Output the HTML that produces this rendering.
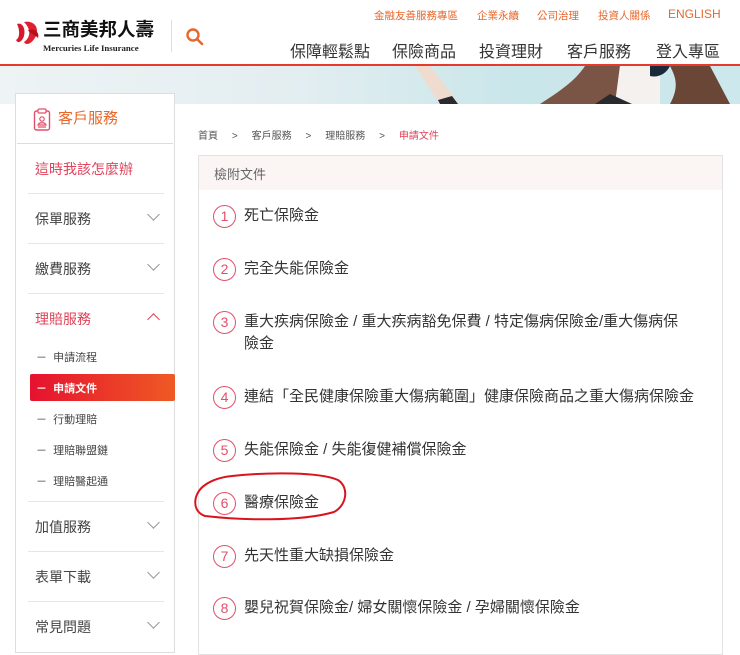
<!DOCTYPE html>
<html><head><meta charset="utf-8"><style>
*{margin:0;padding:0;box-sizing:border-box}
body{width:740px;height:646px;overflow:hidden;background:#fff;font-family:"Liberation Sans","Noto Sans CJK TC",sans-serif;position:relative;color:#333}
.abs{position:absolute;white-space:nowrap}
.top a{color:#e8672a;font-size:10.5px;position:absolute;top:8px}
.nav{position:absolute;top:38px;font-size:16px;color:#333}
.side{position:absolute;left:15px;top:93px;width:160px;height:560px;border:1px solid #ddd;background:#fff}
.si{position:absolute;left:19px;font-size:14px;color:#444}
.dv{position:absolute;left:12px;width:136px;height:1px;background:#e6e6e6}
.chev{position:absolute;left:133px;width:9px;height:9px;border-right:1px solid #999;border-bottom:1px solid #999;transform:rotate(45deg)}
.sub{position:absolute;left:20px;font-size:11px;color:#444}
.box{position:absolute;left:198px;top:155px;width:525px;height:500px;border:1px solid #e2e2e2}
.it{position:absolute;left:244px;font-size:15px;color:#333;line-height:22px}
.c{position:absolute;left:213px;width:23px;height:23px;border:1.3px solid #e0506a;border-radius:50%;color:#e0506a;font-size:14px;text-align:center;line-height:21px}
</style></head><body>
<svg class="abs" style="left:14px;top:20px" width="30" height="28" viewBox="0 0 30 28"><path d="M3 4 C8 2 12 8 10 16 C8 22 4 24 2 20 C6 18 6 10 3 4Z" fill="#d7192c"/><path d="M10 2 C18 0 26 6 22 16 C18 24 12 26 10 22 C16 18 18 10 10 2Z" fill="#e02030"/><path d="M14 10 C20 8 26 12 24 18 C20 14 16 14 14 10Z" fill="#b5101e"/></svg>
<div class="abs" style="left:43px;top:18px;font-size:18.5px;line-height:24px;font-weight:bold;color:#111">三商美邦人壽</div>
<div class="abs" style="left:43px;top:43px;font-size:8.8px;line-height:10px;font-weight:bold;font-family:'Liberation Serif',serif;color:#222">Mercuries Life Insurance</div>
<div class="abs" style="left:171px;top:20px;width:1px;height:32px;background:#ddd"></div>
<svg class="abs" style="left:185px;top:27px" width="20" height="20" viewBox="0 0 20 20"><circle cx="8" cy="8" r="5.5" fill="none" stroke="#e8672a" stroke-width="2.4"/><path d="M12 12 L17 17" stroke="#e8672a" stroke-width="2.6" stroke-linecap="round"/></svg>
<div class="top"><a style="left:374px">金融友善服務專區</a><a style="left:477px">企業永續</a><a style="left:537px">公司治理</a><a style="left:598px">投資人關係</a><a style="left:668px;top:7px;font-size:12px">ENGLISH</a></div>
<div class="nav" style="left:290px">保障輕鬆點</div>
<div class="nav" style="left:392px">保險商品</div>
<div class="nav" style="left:479px">投資理財</div>
<div class="nav" style="left:567px">客戶服務</div>
<div class="nav" style="left:656px">登入專區</div>
<div class="abs" style="left:0;top:64px;width:740px;height:2px;background:#e63a2e"></div>
<div class="abs" style="left:0;top:66px;width:740px;height:38px;background:linear-gradient(90deg,#eef3f5 0%,#e3eef1 40%,#c9e6ea 70%,#cde8ec 100%)"></div>
<svg class="abs" style="left:370px;top:66px" width="370" height="38"><path d="M60 0 L85 32 L70 38 L45 0Z" fill="#f0dccf"/><path d="M68 34 L82 30 L88 38 L70 38Z" fill="#2a2a2e"/><path d="M215 0 L250 0 L245 38 L170 38 C190 25 205 15 215 0Z" fill="#7a5444"/><path d="M250 0 L290 0 L290 38 L245 38Z" fill="#f4f1ef"/><path d="M280 0 L300 0 C296 8 288 12 280 10Z" fill="#1a2a3a"/><path d="M300 0 L340 0 L360 38 L300 38 C310 20 305 10 300 0Z" fill="#6a4636"/><path d="M240 28 L262 38 L225 38Z" fill="#2a2a2e"/></svg>
<div class="side">
<svg class="abs" style="left:17px;top:14px" width="18" height="24" viewBox="0 0 18 24"><rect x="1.5" y="3" width="15" height="19" rx="2" fill="none" stroke="#e0506a" stroke-width="1.4"/><rect x="5" y="1" width="8" height="4" rx="1" fill="#fff" stroke="#e0506a" stroke-width="1.2"/><circle cx="9" cy="11" r="2.2" fill="none" stroke="#e0506a" stroke-width="1.2"/><path d="M5 17 C6 14 12 14 13 17Z M5 19 H13" fill="none" stroke="#e0506a" stroke-width="1.2"/></svg>
<div class="abs" style="left:42px;top:13px;font-size:15px;color:#e8672a">客戶服務</div>
<div class="abs" style="left:1px;top:49px;width:156px;height:1px;background:#ddd"></div>
<div class="si" style="top:65px;color:#e0435a">這時我該怎麼辦</div>
<div class="dv" style="top:99px"></div>
<div class="si" style="top:115px">保單服務</div><div class="chev" style="top:116px"></div>
<div class="dv" style="top:149px"></div>
<div class="si" style="top:165px">繳費服務</div><div class="chev" style="top:166px"></div>
<div class="dv" style="top:199px"></div>
<div class="si" style="top:215px;color:#e0435a">理賠服務</div><div class="chev" style="top:221px;transform:rotate(225deg);border-color:#e0435a"></div>
<div class="sub" style="top:255px">－ &nbsp;申請流程</div>
<div class="abs" style="left:14px;top:280px;width:145px;height:27px;background:linear-gradient(90deg,#e5122f,#ef5a24);border-radius:2px"></div>
<div class="sub" style="top:286px;color:#fff;font-weight:bold">－ &nbsp;申請文件</div>
<div class="sub" style="top:317px">－ &nbsp;行動理賠</div>
<div class="sub" style="top:348px">－ &nbsp;理賠聯盟鏈</div>
<div class="sub" style="top:379px">－ &nbsp;理賠醫起通</div>
<div class="dv" style="top:407px"></div>
<div class="si" style="top:423px">加值服務</div><div class="chev" style="top:424px"></div>
<div class="dv" style="top:457px"></div>
<div class="si" style="top:473px">表單下載</div><div class="chev" style="top:474px"></div>
<div class="dv" style="top:507px"></div>
<div class="si" style="top:523px">常見問題</div><div class="chev" style="top:524px"></div>
</div>
<div class="abs" style="left:198px;top:127px;font-size:10px;color:#555">首頁 &nbsp;&nbsp;&nbsp;&nbsp;&gt;&nbsp;&nbsp;&nbsp;&nbsp; 客戶服務 &nbsp;&nbsp;&nbsp;&nbsp;&gt;&nbsp;&nbsp;&nbsp;&nbsp; 理賠服務 &nbsp;&nbsp;&nbsp;&nbsp;&gt;&nbsp;&nbsp;&nbsp;&nbsp; <span style="color:#e0435a">申請文件</span></div>
<div class="box"><div style="height:34px;background:#fbf5f4;padding:8px 0 0 15px;font-size:13px;color:#666">檢附文件</div></div>
<div class="c" style="top:205px">1</div><div class="it" style="top:205px">死亡保險金</div>
<div class="c" style="top:258px">2</div><div class="it" style="top:258px">完全失能保險金</div>
<div class="c" style="top:311px">3</div><div class="it" style="top:311px;white-space:normal;width:445px">重大疾病保險金 / 重大疾病豁免保費 / 特定傷病保險金/重大傷病保險金</div>
<div class="c" style="top:386px">4</div><div class="it" style="top:386px">連結「全民健康保險重大傷病範圍」健康保險商品之重大傷病保險金</div>
<div class="c" style="top:439px">5</div><div class="it" style="top:439px">失能保險金 / 失能復健補償保險金</div>
<div class="c" style="top:492px">6</div><div class="it" style="top:492px">醫療保險金</div>
<div class="c" style="top:545px">7</div><div class="it" style="top:545px">先天性重大缺損保險金</div>
<div class="c" style="top:597px">8</div><div class="it" style="top:597px">嬰兒祝賀保險金/ 婦女關懷保險金 / 孕婦關懷保險金</div>
<svg class="abs" style="left:0;top:0" width="740" height="646"><path d="M232 476 C270 472 320 472 338 480 C350 488 346 506 334 512 C300 522 240 520 205 516 C192 512 192 494 205 485 C212 480 222 477 232 476" fill="none" stroke="#d9141c" stroke-width="2"/></svg>
</body></html>
